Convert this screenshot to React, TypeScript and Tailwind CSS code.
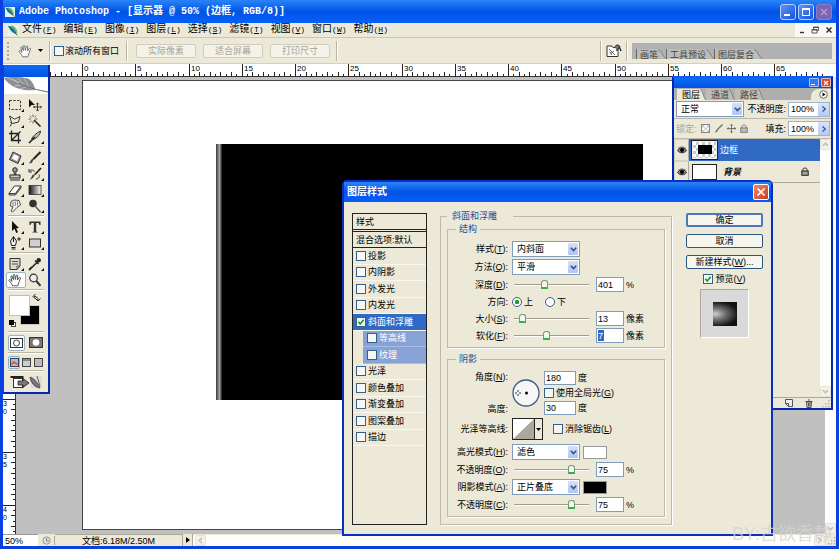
import React, { useState } from 'react';

const SANS = "font-['Liberation_Sans','Noto_Sans_CJK_SC',sans-serif]";
const MONO = "font-['Liberation_Mono','Noto_Sans_CJK_SC',monospace]";

const MENUS = [
  ['文件', 'F'],
  ['编辑', 'E'],
  ['图像', 'I'],
  ['图层', 'L'],
  ['选择', 'S'],
  ['滤镜', 'T'],
  ['视图', 'V'],
  ['窗口', 'W'],
  ['帮助', 'H'],
];

const Feather = ({ className = '' }: { className?: string }) => (
  <svg viewBox="0 0 12 12" className={className} aria-hidden="true">
    <rect width="12" height="12" fill="#e8f4f4" />
    <path d="M1 1 C5 1 9 3 10 10 C6 9 2 6 1 1Z" fill="#2b8f9c" />
    <path d="M4 1 C8 2 10 5 10 9" stroke="#6cc04a" strokeWidth="1.4" fill="none" />
    <path d="M1 1 L11 11.5" stroke="#134" strokeWidth="0.8" />
  </svg>
);

// ---------- title bar / menu bar ----------

const TitleBar = () => (
  <header className="flex h-[23px] shrink-0 items-center bg-linear-to-b from-[#2a84f8] via-[#0353e6] to-[#0560f8] pt-px pr-1 pl-[2px]">
    <Feather className="h-[10px] w-[10px]" />
    <h1 className={`ml-1 flex-1 text-[10px] leading-3 font-bold whitespace-pre text-white ${MONO}`}>
      Adobe Photoshop - [显示器 @ 50% (边框, RGB/8)]
    </h1>
    <div className="flex gap-[2px]">
      <button type="button" aria-label="最小化" className="flex h-4 w-4 items-end rounded-[3px] border border-[#b8d0fa] bg-linear-to-br from-[#5f92f8] to-[#1a50d8] p-[3px]">
        <span className="h-[2px] w-[6px] bg-white" />
      </button>
      <button type="button" aria-label="还原" className="h-4 w-4 rounded-[3px] border border-[#b8d0fa] bg-linear-to-br from-[#5f92f8] to-[#1a50d8] p-[3px]">
        <span className="block h-2 w-2 border border-t-2 border-white" />
      </button>
      <button type="button" aria-label="关闭" className="h-4 w-4 rounded-[3px] border border-[#8b7fc0] bg-[#7a64b4] p-[3px]">
        <svg viewBox="0 0 8 8" className="h-2 w-2"><path d="M1 1L7 7M7 1L1 7" stroke="#a79bd2" strokeWidth="1.5" /></svg>
      </button>
    </div>
  </header>
);

const MenuBar = () => (
  <nav className="flex h-[15px] shrink-0 items-center border-b border-[#c9c6b6] bg-[#ece9d8] pl-1">
    <Feather className="h-[11px] w-[12px]" />
    <ul className={`ml-[3px] flex gap-[7px] text-[10px] leading-3 text-black ${MONO}`}>
      {MENUS.map(([name, key]) => (
        <li key={name}>
          <a href="#" className="block whitespace-nowrap">
            {name}<span className="text-[8px]">(<u>{key}</u>)</span>
          </a>
        </li>
      ))}
    </ul>
    <div className="ml-auto flex h-full w-[41px] items-center justify-around bg-[#f8f8f4] text-[#333]">
      <svg viewBox="0 0 8 8" className="h-2 w-2"><path d="M2 6.5H6" stroke="currentColor" strokeWidth="1.4" /></svg>
      <svg viewBox="0 0 8 8" className="h-2 w-2"><path d="M2.5 3V1H7.5V4.5H6M1 3.5H6V7H1Z M2.5 1.5H7.5 M1 4H6" stroke="currentColor" fill="none" strokeWidth="0.8" /></svg>
      <svg viewBox="0 0 8 8" className="h-2 w-2"><path d="M1.5 1.5L6.5 6.5M6.5 1.5L1.5 6.5" stroke="currentColor" strokeWidth="1.5" /></svg>
    </div>
  </nav>
);

const Hand = ({ className = '' }: { className?: string }) => (
  <svg viewBox="0 0 14 14" className={className} aria-hidden="true">
    <path
      d="M4.5 12.8 L3.6 10.6 L1 7.6 C0.6 6.7 1.8 6.3 2.5 7 L4 8.4 L2.8 3.8 C2.7 2.8 3.9 2.6 4.2 3.5 L5.4 6.6 L5.2 2.2 C5.3 1.2 6.6 1.2 6.8 2.2 L7.3 6.4 L8.3 2.5 C8.6 1.6 9.8 1.9 9.7 2.8 L9.4 7 L11.2 4.6 C11.8 3.9 12.8 4.5 12.5 5.3 L10.8 9.6 L9.8 12.8 Z"
      fill="#fff"
      stroke="#666"
      strokeWidth="0.9"
      strokeLinejoin="round"
    />
  </svg>
);

const Divider = () => <span className="h-5 w-[2px] border-l border-[#b5b2a2] bg-white" />;

const OptionsBar = () => (
  <section className={`flex h-[26px] shrink-0 items-center border-b border-[#d3d0c0] bg-[#ece9d8] pl-1 text-[9px] leading-3 ${SANS}`}>
    <span className="h-[18px] border-l-2 border-dotted border-[#aca899]" />
    <Hand className="ml-[9px] h-[14px] w-[14px]" />
    <svg viewBox="0 0 5 3" className="ml-[6px] h-[3px] w-[5px]"><path d="M0 0H5L2.5 3Z" /></svg>
    <span className="ml-[6px] flex items-center"><Divider /></span>
    <label className="ml-[3px] flex items-center gap-px">
      <Check /> 滚动所有窗口
    </label>
    <span className="mr-2 ml-[7px] flex items-center"><Divider /></span>
    <div className="flex gap-[7px]">
      {['实际像素', '适合屏幕', '打印尺寸'].map((t) => (
        <button key={t} type="button" disabled className="h-[14px] w-[60px] rounded-[2px] border border-[#d0cdbf] bg-[#f4f3ea] leading-3 text-[#a7a594]">
          {t}
        </button>
      ))}
    </div>
    <span className="ml-[6px] flex items-center"><Divider /></span>
    <div className="ml-auto flex items-center gap-1 pr-1">
      <Divider />
      <svg viewBox="0 0 16 14" className="h-[14px] w-4" aria-hidden="true">
        <path d="M1 2H6L7 3.5H12V12.5H1Z" fill="#fff" stroke="#333" />
        <path d="M3 5L9 11M4 10L8 7M3.500 7.500L6 11" stroke="#666" />
        <path d="M9 2.500C10 0.500 13.500 0.500 14 3L12 4.500L10.500 7" fill="#777" stroke="#222" />
        <path d="M13.500 3.500L15 7" stroke="#222" strokeWidth="1.4" />
      </svg>
      <Divider />
      <div className="flex h-4 w-[200px] items-end bg-[#b1b1b1] pl-1 text-[#444]">
        {['画笔', '工具预设', '图层复合'].map((t) => (
          <span key={t} className="flex h-[10px] items-center">
            <span className="h-[10px] border-l border-[#666] bg-[#bdbdb8] pl-[3px] leading-3">{t}</span>
            <svg viewBox="0 0 9 10" className="h-[10px] w-[8px]"><path d="M0 0C4 1 5 8 9 10H0Z" fill="#bdbdb8" /><path d="M0 0C4 1 5 8 9 10" fill="none" stroke="#777" /></svg>
          </span>
        ))}
      </div>
    </div>
  </section>
);

// ---------- shared controls ----------

const Check = ({ on = false }: { on?: boolean }) => {
  const [checked, setChecked] = useState(on);
  return (
    <span className="relative flex h-[10px] w-[10px] shrink-0">
      <input
        type="checkbox"
        checked={checked}
        onChange={(e) => setChecked(e.target.checked)}
        className="h-[10px] w-[10px] appearance-none border border-[#33608c] bg-[#f6f6f2]"
      />
      {checked && (
        <svg viewBox="0 0 10 10" className="pointer-events-none absolute inset-0 h-[10px] w-[10px]">
          <path d="M2.3 4.8L4.2 7L7.7 2.8" stroke="#1e9a1e" strokeWidth="1.7" fill="none" />
        </svg>
      )}
    </span>
  );
};

interface DropProps {
  id: string;
  options: string[];
}

const Drop = ({ id, options }: DropProps) => (
  <span className="relative flex h-4 w-[68px] shrink-0">
    <select id={id} className="h-4 w-full appearance-none border border-[#7f9db9] bg-white pl-1 leading-3 text-black">
      {options.map((o) => (
        <option key={o}>{o}</option>
      ))}
    </select>
    <span className="pointer-events-none absolute top-[2px] right-[2px] flex h-3 w-[10px] items-center justify-center rounded-[1px] bg-linear-to-b from-[#d5e1fc] to-[#aec5f5]">
      <svg viewBox="0 0 7 5" className="h-[5px] w-[7px]"><path d="M0.8 0.8L3.5 3.5L6.2 0.8" stroke="#36507a" strokeWidth="1.6" fill="none" /></svg>
    </span>
  </span>
);

const Slide = ({ id, value }: { id: string; value: number }) => (
  <input
    id={id}
    type="range"
    min={0}
    max={100}
    defaultValue={value}
    className="mr-[7px] ml-[2px] h-3 w-[75px] appearance-none bg-transparent [&::-webkit-slider-runnable-track]:h-[2px] [&::-webkit-slider-runnable-track]:border-t [&::-webkit-slider-runnable-track]:border-[#a09d8e] [&::-webkit-slider-runnable-track]:bg-white [&::-webkit-slider-thumb]:-mt-[5px] [&::-webkit-slider-thumb]:h-[9px] [&::-webkit-slider-thumb]:w-[7px] [&::-webkit-slider-thumb]:appearance-none [&::-webkit-slider-thumb]:rounded-t-[3px] [&::-webkit-slider-thumb]:border [&::-webkit-slider-thumb]:border-b-2 [&::-webkit-slider-thumb]:border-[#6f9c78] [&::-webkit-slider-thumb]:border-b-[#2fb44a] [&::-webkit-slider-thumb]:bg-[#f4f6f0]"
  />
);

const Num = ({ id, value, label }: { id?: string; value: string; label?: string }) => (
  <input id={id} aria-label={label} defaultValue={value} className="h-[15px] w-7 border border-[#7f9db9] bg-white pl-px text-black" />
);

interface FieldProps {
  label: string;
  hotkey?: string;
  htmlFor?: string;
  tall?: boolean;
  children: React.ReactNode;
}

const Field = ({ label, hotkey, htmlFor, tall, children }: FieldProps) => (
  <div className={`flex items-center ${tall ? 'h-[18px]' : 'h-[17px]'}`}>
    <label htmlFor={htmlFor} className="mr-1 w-[60px] shrink-0 text-right whitespace-nowrap">
      {label}
      {hotkey && <>(<u>{hotkey}</u>)</>}:
    </label>
    {children}
  </div>
);

// ---------- rulers and canvas ----------

const TopRuler = () => {
  const ticks = Array.from({ length: 400 }, (_, i) => i - 6);
  return (
    <svg className="ml-[47px] block h-[13px] w-[calc(100%-58px)]" aria-hidden="true">
      <rect width="100%" height="13" fill="#fff" />
      {ticks.map((i) => {
        const x = Math.round(32 + i * 5.325) + 0.5;
        const top = i % 10 === 0 ? 0 : i % 2 === 0 ? 8 : 10;
        return <path key={i} d={`M${x} ${top}V13`} stroke="#222" />;
      })}
      {[0, 5, 10, 15, 20, 25, 30, 35, 40, 45, 50, 55, 60, 65].map((n) => (
        <text key={n} x={Math.round(34 + n * 10.65)} y="7" fontSize="8" fontFamily="Liberation Sans, sans-serif">{n}</text>
      ))}
      <path d="M0 12.5H2000" stroke="#333" />
    </svg>
  );
};

const SideRuler = () => {
  const ticks = Array.from({ length: 250 }, (_, i) => i);
  return (
    <svg className="h-full w-[13px] shrink-0 bg-white" aria-hidden="true">
      {ticks.map((i) => {
        const y = Math.round(3 + i * 5.31) + 0.5;
        const left = i % 10 === 0 ? 0 : i % 2 === 0 ? 8 : 10;
        return <path key={i} d={`M${left} ${y}H13`} stroke="#222" />;
      })}
      {[30, 35, 40].map((n) =>
        String(n).split('').map((c, k) => (
          <text key={`${n}-${k}`} x="0" y={Math.round(10 + n * 10.62) + k * 8} fontSize="7" fontFamily="Liberation Sans, sans-serif">{c}</text>
        ))
      )}
      <path d="M12.5 0V2000" stroke="#333" />
    </svg>
  );
};

const Arrow = ({ d }: { d: string }) => (
  <svg viewBox="0 0 11 11" className="h-[11px] w-[11px] shrink-0" aria-hidden="true">
    <rect x="0.5" y="0.5" width="10" height="10" rx="1" fill="#f2f1ea" stroke="#e2e1d6" />
    <path d={d} stroke="#bdbbab" strokeWidth="1.4" fill="none" />
  </svg>
);

const UP = 'M3 6.8L5.5 4.2L8 6.8';
const DOWN = 'M3 4.2L5.5 6.8L8 4.2';

const Workspace = () => (
  <main className="flex min-h-0 flex-1 flex-col">
    <div className="shrink-0 bg-[#fdfdfa]"><TopRuler /></div>
    <div className="flex min-h-0 flex-1">
      <SideRuler />
      <div className="min-w-0 flex-1 bg-[#c0c0c0] pt-[3px] pr-[90px] pb-1 pl-[66px]">
        <div className="h-full overflow-hidden border border-[#444] bg-white pt-[63px] pl-[133px]">
          <div className="h-64 w-[427px] bg-black">
            <div className="h-full w-[7px] bg-linear-to-r from-[#3a3a3a] via-[#a8a8a8] to-black" />
          </div>
        </div>
      </div>
      <div className="flex w-[11px] flex-col justify-between bg-[#fdfdfa]">
        <Arrow d={UP} />
        <Arrow d={DOWN} />
      </div>
    </div>
  </main>
);

const Grip = () => (
  <svg viewBox="0 0 9 9" className="h-[9px] w-[9px]" fill="#b5b2a2" aria-hidden="true">
    <path d="M7 1H8.500V2.500H7ZM7 4H8.500V5.500H7ZM7 7H8.500V8.500H7ZM4 4H5.500V5.500H4ZM4 7H5.500V8.500H4ZM1 7H2.500V8.500H1Z" />
  </svg>
);

const StatusBar = () => (
  <footer className={`flex h-3 shrink-0 items-center bg-[#ece9d8] text-[9px] leading-3 ${SANS}`}>
    <input aria-label="缩放" defaultValue="50%" className="h-3 w-[35px] border-t border-[#999] bg-white pl-[2px]" />
    <span className="flex w-[17px] justify-center border-r border-[#aca899]">
      <svg viewBox="0 0 9 9" className="h-[9px] w-[9px]"><circle cx="4.5" cy="4.5" r="3.7" fill="#ddd" stroke="#999" /><path d="M4.5 2V5H7" stroke="#888" fill="none" /></svg>
    </span>
    <span className="h-3 w-[128px] border-t border-r border-[#aca899] text-center">文档:6.18M/2.50M</span>
    <span className="flex h-3 w-[10px] items-center justify-center border-r border-[#aca899]">
      <svg viewBox="0 0 4 6" className="h-[6px] w-1"><path d="M0 0L4 3L0 6Z" /></svg>
    </span>
    <div className="flex flex-1 justify-between bg-[#fdfdfa] pl-[2px]">
      <Arrow d="M6.8 3L4.2 5.5L6.8 8" />
      <Arrow d="M4.2 3L6.8 5.5L4.2 8" />
    </div>
    <span className="flex w-[11px] justify-end"><Grip /></span>
  </footer>
);

// ---------- toolbox ----------

const TOOLS: { name: string; more?: boolean; art: React.ReactNode }[][] = [
  [
    { name: '矩形选框', more: true, art: <rect x="1.5" y="2.5" width="11" height="9" fill="none" stroke="#333" strokeDasharray="2.4 1.4" /> },
    { name: '移动', art: <><path d="M1 1L7 7H3.6L1 9.5Z" fill="#111" /><path d="M9.5 5V13M5.5 9H13.5M8.2 6.3L9.5 5L10.8 6.3M8.2 11.7L9.5 13L10.8 11.7M12.3 7.8L13.5 9L12.3 10.2M6.7 7.8L5.5 9L6.7 10.2" stroke="#222" fill="none" strokeWidth="0.9" /></> },
    { name: '套索', more: true, art: <path d="M2 12.5L3.8 9.2L1.5 2L6.5 5.2L12 2.5L10.5 8L4.5 9.5L2.500 8.500" fill="none" stroke="#333" /> },
    { name: '魔棒', art: <><path d="M6 6L12.5 12.5" stroke="#222" strokeWidth="1.6" /><path d="M5 0.5V3M5 7V9.5M0.5 5H3M7 5H9.5M1.8 1.8L3.5 3.5M8.2 1.8L6.6 3.4M1.8 8.2L3.4 6.6" stroke="#555" strokeWidth="0.9" /></> },
    { name: '裁剪', art: <path d="M3.5 0.5V10.5H13M1 3.5H10.5V13.5M3.5 10.5L12.5 1.5" fill="none" stroke="#222" strokeWidth="1.3" /> },
    { name: '切片', more: true, art: <><path d="M3.500 9C5 6 8.500 3 12.5 1C12.5 4 9 8 7 8.5L5.5 9.5Z" fill="#bbb" stroke="#222" strokeWidth="0.9" /><path d="M7 7L1 13" stroke="#222" strokeWidth="1.6" /></> },
  ],
  [
    { name: '修补', more: true, art: <><path d="M5 1L13 5L10 12.500L1.500 8.500Z" fill="#999" stroke="#333" /><path d="M6 3L11 5.500L9 10L4 7.500Z" fill="#fff" /></> },
    { name: '画笔', more: true, art: <><path d="M12.5 1L5.5 8" stroke="#222" strokeWidth="2" /><path d="M6.3 7.5L5 9.5C4.5 12 3 12.5 0.8 12.3C2.5 11 2.5 9 4.5 7.5Z" fill="#444" /></> },
    { name: '图章', more: true, art: <><circle cx="7" cy="3" r="2.3" fill="#999" stroke="#222" /><path d="M6 5L5.3 8H8.7L8 5Z" fill="#555" /><rect x="2" y="8" width="10" height="3" fill="#ccc" stroke="#222" /><path d="M2 13H12" stroke="#222" /></> },
    { name: '历史画笔', more: true, art: <><path d="M13 1L7 7.5" stroke="#222" strokeWidth="1.8" /><path d="M7.5 7L5 11L2 12.8L4.5 8Z" fill="#444" /><path d="M1 4.5C3 2 6 3 6.5 5M1 2V5H4M8 12C11 12 12 9 11 7.5" fill="none" stroke="#333" /></> },
    { name: '橡皮擦', more: true, art: <><path d="M6.5 3H13L7.5 10.5H1Z" fill="#fff" stroke="#333" /><path d="M1 10.5V12H7.5L13 5V3L7.5 10.5Z" fill="#aaa" stroke="#333" strokeWidth="0.8" /></> },
    { name: '渐变', more: true, art: <><defs><linearGradient id="tg"><stop offset="0" stopColor="#111" /><stop offset="1" stopColor="#fff" /></linearGradient></defs><rect x="1" y="2.5" width="12" height="9" fill="url(#tg)" stroke="#333" strokeWidth="0.8" /></> },
    { name: '涂抹', more: true, art: <><path d="M3 2.500L6 1L11 1.500L12.500 6L9 8.500L4.500 13L3 12L5 8L2.500 7Z" fill="#eee" stroke="#444" strokeWidth="0.9" /><path d="M5 3V7.500M7.300 2.500V7M9.500 2.500V6.500" stroke="#666" strokeWidth="0.8" /></> },
    { name: '加深', more: true, art: <><circle cx="5" cy="4.5" r="3.8" fill="#333" /><path d="M7.5 7.5L12.5 13" stroke="#555" strokeWidth="1.4" /></> },
  ],
  [
    { name: '路径选择', more: true, art: <path d="M4 1V11L6.4 8.8L8.3 13L10 12.2L8.2 8.3L11 8Z" fill="#111" /> },
    { name: '文字', more: true, art: <path d="M1.5 1.5H12.5V5H11.5L10.5 3H8.2V11.6L10 12.5H4L5.8 11.6V3H3.5L2.5 5H1.5Z" fill="#333" /> },
    { name: '钢笔', more: true, art: <><path d="M5.5 0.5L8.5 5L7.5 9.5H3.5L2.5 5Z" fill="#eee" stroke="#222" /><path d="M5.5 1V6M3.500 11.500H7.500M3.500 13H7.500" stroke="#222" strokeWidth="1.1" /><path d="M9 3H13M11 1V5" stroke="#222" /></> },
    { name: '矩形', more: true, art: <rect x="1.5" y="3" width="11" height="8" fill="#cfcfcf" stroke="#333" /> },
  ],
  [
    { name: '注释', more: true, art: <><path d="M2 1.5H12V9L9 12.5H2Z" fill="#d9d9d2" stroke="#333" /><path d="M4 4.5H10M4 7H10M9 12.5V9H12" stroke="#555" fill="none" /></> },
    { name: '吸管', more: true, art: <><path d="M8.5 5.5L3 11L1 13" stroke="#222" strokeWidth="1.8" /><path d="M8 5L3.5 9.5" stroke="#ddd" strokeWidth="0.8" /><path d="M7 3.5L10.5 7" stroke="#222" strokeWidth="1.6" /><circle cx="10.7" cy="3.3" r="2.2" fill="#222" /></> },
    { name: '抓手', art: <path d="M4.5 12.8L3.6 10.6L1 7.6C.6 6.7 1.8 6.3 2.5 7L4 8.4L2.8 3.8C2.7 2.8 3.9 2.6 4.2 3.5L5.4 6.6L5.2 2.2C5.3 1.2 6.6 1.2 6.8 2.2L7.3 6.4L8.3 2.5C8.6 1.6 9.8 1.9 9.7 2.8L9.4 7L11.2 4.6C11.8 3.9 12.8 4.5 12.5 5.3L10.8 9.6L9.8 12.8Z" fill="#fff" stroke="#444" strokeWidth="0.9" /> },
    { name: '缩放', art: <><circle cx="5.5" cy="5" r="3.8" fill="#eee" stroke="#333" strokeWidth="1.2" /><path d="M8.3 8L12.5 12.8" stroke="#333" strokeWidth="2" /></> },
  ],
];

const Rule = () => <hr className="mx-1 h-[2px] border-0 border-t border-[#b9b6a6] bg-white" />;

const Toolbox = () => {
  const [tool, setTool] = useState('抓手');
  return (
    <aside className="absolute top-[65px] left-0 w-[50px] border-r-2 border-b-2 border-l-4 border-[#0627b0] border-l-[#0a3fe0] bg-[#ece9d8]">
      <div className="h-3 bg-linear-to-b from-[#0c6bf8] to-[#0453e0]" />
      <svg viewBox="0 0 44 17" className="block h-[17px] w-full bg-white" preserveAspectRatio="none" aria-hidden="true">
        <path d="M0 1C8 -1 20 0 25 2C29 5 31 10 31 13C22 14 12 12 7 8C4 6 1 3 0 1Z" fill="#8d9094" />
        <path d="M3 1C12 3 20 8 30 13M8 2L14 6M14 1L20 8M20 1L25 10M10 9L17 8M16 12L22 10" stroke="#c4c7ca" fill="none" strokeWidth="0.8" />
        <path d="M15 6C24 11 34 13 44 15" stroke="#666" fill="none" />
      </svg>
      <div className="pt-px">
        {TOOLS.map((group, g) => (
          <div key={g}>
            {g > 0 && <Rule />}
            <div className="grid grid-cols-2 gap-x-px px-[2px] pt-[2px] pb-px">
              {group.map((t) => (
                <button
                  key={t.name}
                  type="button"
                  aria-label={t.name}
                  onClick={() => setTool(t.name)}
                  className={`flex h-4 items-center justify-center rounded-[2px] ${tool === t.name ? 'border border-[#9bb4c4] bg-white' : ''}`}
                >
                  <svg viewBox="0 0 16 14" className="h-[14px] w-4">
                    {t.art}
                    {t.more && <path d="M16 11V14H13Z" fill="#111" />}
                  </svg>
                </button>
              ))}
            </div>
          </div>
        ))}
      </div>
      <Rule />
      <svg viewBox="0 0 44 40" className="block h-10 w-full" aria-hidden="true">
        <rect x="16.500" y="14.500" width="19" height="19" fill="#000" stroke="#ccc" />
        <rect x="5.500" y="4.500" width="20" height="20" fill="#fff" stroke="#b8c0c4" />
        <path d="M30 5.500C33 5.500 34 7 34 9M31.500 3L29 5.500L31.500 8M31.500 7.500L34 10L36.500 7.500" stroke="#222" fill="none" />
        <rect x="7.500" y="31.500" width="4" height="4" fill="#fff" stroke="#444" />
        <rect x="5" y="29" width="5" height="5" fill="#000" />
      </svg>
      <Rule />
      <div className="flex h-[19px] items-center justify-center gap-[2px]">
        <button type="button" aria-label="标准模式" className="flex h-4 w-[17px] items-center justify-center rounded-[2px] border border-[#9bb4c4] bg-white">
          <svg viewBox="0 0 13 10" className="h-[10px] w-[13px]"><rect x="0.5" y="0.5" width="12" height="9" fill="#fff" stroke="#333" /><circle cx="6.5" cy="5" r="3" fill="#fff" stroke="#444" /></svg>
        </button>
        <button type="button" aria-label="快速蒙版" className="flex h-4 w-[17px] items-center justify-center">
          <svg viewBox="0 0 14 11" className="h-[11px] w-[14px]"><rect x="0.5" y="0.5" width="13" height="10" fill="#777" stroke="#333" /><circle cx="7" cy="5.500" r="3.300" fill="#fff" /></svg>
        </button>
      </div>
      <Rule />
      <div className="flex h-4 items-center justify-center gap-px">
        <button type="button" aria-label="标准屏幕" className="flex h-[13px] w-[12px] items-center justify-center rounded-[2px] border border-[#8fb2cc] bg-[#dbe9f2]">
          <svg viewBox="0 0 9 9" className="h-[9px] w-[9px]"><rect x="0.5" y="0.5" width="8" height="8" fill="#a9c3dd" stroke="#345" /><path d="M1.500 6.500L4 4L7.500 6.500" stroke="#e05c3c" strokeWidth="2" fill="none" /></svg>
        </button>
        <button type="button" aria-label="带菜单全屏" className="flex w-[11px] justify-center">
          <svg viewBox="0 0 9 9" className="h-[9px] w-[9px]"><rect x="0.5" y="0.5" width="8" height="8" fill="#ccc" stroke="#444" /><path d="M1 2H8" stroke="#444" /></svg>
        </button>
        <button type="button" aria-label="全屏" className="flex w-[11px] justify-center">
          <svg viewBox="0 0 9 9" className="h-[9px] w-[9px]"><rect x="0.5" y="0.5" width="8" height="8" fill="#bbb" stroke="#444" /></svg>
        </button>
      </div>
      <Rule />
      <button type="button" aria-label="在 ImageReady 中编辑" className="flex h-[20px] w-full items-center justify-center">
        <svg viewBox="0 0 32 14" className="h-[14px] w-8">
          <rect x="3.500" y="3.500" width="9" height="9" fill="#fff" stroke="#333" />
          <path d="M0.500 2H12.500V4" stroke="#222" strokeWidth="2" fill="none" />
          <path d="M8 6H13V3.500L19 8L13 12.500V10H8Z" fill="#777" stroke="#222" strokeWidth="0.800" />
          <rect x="21" y="1" width="11" height="12" fill="#ddd" />
          <path d="M20 2C25 4 28 8 30 13C24 12 21 8 20 2ZM27 1L30 11" fill="#777" stroke="#444" strokeWidth="0.800" />
        </svg>
      </button>
    </aside>
  );
};

// ---------- layers palette ----------

const Percent = ({ id }: { id: string }) => (
  <span className="flex h-[15px] w-[42px] shrink-0 border border-[#9fb4cc] bg-white">
    <input id={id} defaultValue="100%" className="w-full min-w-0 pl-[2px]" />
    <span className="flex w-[11px] shrink-0 items-center justify-center bg-linear-to-b from-[#d8e4fd] to-[#b5caf7]">
      <svg viewBox="0 0 4 6" className="h-[6px] w-1"><path d="M0.500 0.500L3.500 3L0.500 5.500" stroke="#2c4a86" fill="none" strokeWidth="1.200" /></svg>
    </span>
  </span>
);

const Eye = () => (
  <span className="flex w-[15px] shrink-0 items-center justify-center border border-[#d6d3c3] border-r-[#aaa]">
    <svg viewBox="0 0 10 8" className="h-2 w-[10px]">
      <path d="M0.500 4.500C2.500 1 7.500 1 9.500 4.500C7.500 7.500 2.500 7.500 0.500 4.500Z" fill="#888" stroke="#222" />
      <path d="M1 2.500C3 0.500 7 0.500 9 2.500" fill="none" stroke="#555" strokeWidth="0.800" />
      <circle cx="5" cy="4" r="2" fill="#000" />
    </svg>
  </span>
);

const Lock = ({ color }: { color: string }) => (
  <svg viewBox="0 0 8 9" className="h-[9px] w-2" stroke={color} fill="none"><path d="M2 4V2.500C2 0.500 6 0.500 6 2.500V4" /><rect x="0.800" y="4" width="6.400" height="4.300" fill={color} fillOpacity="0.35" /></svg>
);

const LayersPalette = () => (
  <aside className={`absolute top-[76px] right-[6px] flex h-[334px] w-[161px] flex-col border-2 border-[#0627b0] border-t-[#0c5ff0] bg-[#ece9d8] text-[9px] leading-3 ${SANS}`}>
    <div className="flex h-[10px] shrink-0 items-start justify-end gap-[2px] bg-linear-to-b from-[#0c6bf8] to-[#0453e0]">
      <button type="button" aria-label="最小化" className="flex h-[9px] w-[10px] items-end rounded-[1px] border border-[#a8c4fa] bg-[#3c76ee] p-px"><span className="h-px w-1 bg-white" /></button>
      <button type="button" aria-label="关闭" className="flex h-[9px] w-[10px] items-center justify-center rounded-[1px] border border-[#f0b8a8] bg-[#d8482c]">
        <svg viewBox="0 0 6 6" className="h-[6px] w-[6px]"><path d="M1 1L5 5M5 1L1 5" stroke="#fff" strokeWidth="1.200" /></svg>
      </button>
    </div>
    <div className="flex h-3 shrink-0 items-end bg-[#aeaeae] pl-[3px] text-[#444]">
      {['图层', '通道', '路径'].map((t, i) => (
        <span key={t} className="flex h-[11px]">
          <span className={`pl-[5px] leading-3 ${i === 0 ? 'bg-[#ece9d8] text-black' : 'bg-[#bdbdb8]'}`}>{t}</span>
          <svg viewBox="0 0 9 11" className="h-[11px] w-[6px]" preserveAspectRatio="none"><path d="M0 0C4 1 5 9 9 11H0Z" fill={i === 0 ? '#ece9d8' : '#bdbdb8'} /><path d="M0 0C4 1 5 9 9 11" fill="none" stroke="#777" /></svg>
        </span>
      ))}
      <span className="ml-auto flex h-[11px] items-center rounded-tl-[8px] bg-[#ece9d8] pr-[3px] pl-2">
        <svg viewBox="0 0 9 9" className="h-[9px] w-[9px]"><circle cx="4.500" cy="4.500" r="3.800" fill="#fff" stroke="#444" strokeWidth="0.800" /><path d="M3.500 2.500L6.500 4.500L3.500 6.500Z" /></svg>
      </span>
    </div>
    <div className="flex h-[19px] shrink-0 items-center border-b border-[#bbb8a8] pr-px pl-[2px]">
      <Drop id="blend" options={['正常']} />
      <label htmlFor="opacity" className="ml-auto pr-[2px]">不透明度:</label>
      <Percent id="opacity" />
    </div>
    <div className="flex h-[20px] shrink-0 items-center border-b border-[#bbb8a8] pr-px pl-[2px]">
      <span className="text-[#a7a594]">锁定:</span>
      <span className="ml-1 flex items-center gap-1">
        <svg viewBox="0 0 9 9" className="h-[9px] w-[9px]"><rect x="0.500" y="0.500" width="8" height="8" fill="#fff" stroke="#888" /><path d="M1 1H3.500V3.500H6V1H8V3.500H6V6H8V8H6V6H3.500V8H1V6H3.500V3.500H1Z" fill="#ccc" /></svg>
        <svg viewBox="0 0 9 9" className="h-[9px] w-[9px]"><path d="M8.500 0.500L4 5" stroke="#777" strokeWidth="1.500" /><path d="M4.500 4.500C4 7.500 3 8.500 0.500 8.500C2 7 2 6 3.500 4.500Z" fill="#777" /></svg>
        <svg viewBox="0 0 9 9" className="h-[9px] w-[9px]"><path d="M4.500 0V9M0 4.500H9M3.200 1.500L4.500 0.200L5.800 1.500M3.200 7.500L4.500 8.800L5.800 7.500M1.500 3.200L0.200 4.500L1.500 5.800M7.500 3.200L8.800 4.500L7.500 5.800" stroke="#666" fill="none" strokeWidth="0.900" /></svg>
        <Lock color="#777" />
      </span>
      <label htmlFor="fill" className="ml-auto pr-[2px]">填充:</label>
      <Percent id="fill" />
    </div>
    <div className="flex min-h-0 flex-1">
      <ul className="flex-1">
        <li className="flex h-[22px]">
          <Eye />
          <div className="flex flex-1 items-center gap-[3px] bg-[#316ac5] pl-[3px] text-white">
            <span className="flex h-[18px] w-[25px] items-start justify-center border border-[#eee] bg-white bg-[repeating-conic-gradient(#ccc_0_25%,#fff_0_50%)] bg-[length:6px_6px] pt-[3px] outline outline-[#222]">
              <span className="h-[9px] w-[14px] bg-black" />
            </span>
            边框
          </div>
        </li>
        <li className="flex h-[22px] border-b border-[#aca899]">
          <Eye />
          <div className="flex flex-1 items-center gap-[6px] pr-[11px] pl-[3px]">
            <span className="h-4 w-[25px] border border-[#222] bg-white" />
            <i className="flex-1 font-bold">背景</i>
            <Lock color="#222" />
          </div>
        </li>
      </ul>
      <div className="flex w-[11px] flex-col justify-between bg-[#fdfdfa]">
        <Arrow d={UP} />
        <Arrow d={DOWN} />
      </div>
    </div>
    <div className="flex h-[11px] shrink-0 items-center justify-end border-t border-[#aca899] pr-px">
      <svg viewBox="0 0 8 8" className="mr-3 h-2 w-2"><path d="M0.500 0.500H7.500V7.500H3.500L0.500 4.500Z M0.500 4.500H3.500V7.500" fill="#eee" stroke="#555" /></svg>
      <svg viewBox="0 0 8 9" className="mr-2 h-[9px] w-2"><path d="M1.500 3H6.500L6 8.500H2ZM0.500 2.500H7.500M3 1H5M3.500 4V7.500M5 4V7.500" fill="#ccc" stroke="#444" strokeWidth="0.900" /></svg>
      <Grip />
    </div>
  </aside>
);

// ---------- layer style dialog ----------

const STYLES = ['投影', '内阴影', '外发光', '内发光', '斜面和浮雕', '等高线', '纹理', '光泽', '颜色叠加', '渐变叠加', '图案叠加', '描边'];

const StyleList = () => (
  <div className="flex w-[75px] shrink-0 flex-col border border-[#222]">
    <div className="flex h-[18px] shrink-0 items-center border-b-[3px] border-double border-[#222] pl-[3px]">样式</div>
    <div className="flex h-4 shrink-0 items-center border-b border-[#222] pl-[3px]">混合选项:默认</div>
    <ul className="grid h-[198px] grid-rows-12">
      {STYLES.map((s) => {
        const sub = s === '等高线' || s === '纹理';
        const active = s === '斜面和浮雕';
        return (
          <li
            key={s}
            className={`flex items-center border-b ${sub ? 'ml-[10px] border-[#a9bde0] bg-[#87a3d6] pl-1 text-white' : 'border-[#f8f7f0] pl-[3px]'} ${active ? 'bg-[#316ac5] text-white' : ''}`}
          >
            <label className="flex items-center gap-[2px] whitespace-nowrap">
              <Check on={active} /> {s}
            </label>
          </li>
        );
      })}
    </ul>
  </div>
);

const Legend = ({ children, wide }: { children: React.ReactNode; wide?: boolean }) => (
  <legend className={`h-3 text-[#17509f] ${wide ? 'pr-4 pl-[5px]' : 'ml-2 px-[3px]'}`}>{children}</legend>
);

const LayerStyleDialog = () => (
  <section
    role="dialog"
    aria-label="图层样式"
    className={`absolute top-[180px] left-[342px] w-[431px] rounded-t-[5px] border-2 border-[#0a2fc0] bg-[#ece9d8] text-[9px] leading-3 text-black ${SANS}`}
  >
    <div className="flex h-5 items-center bg-linear-to-b from-[#2a84f8] via-[#0353e6] to-[#0560f8] pr-[2px] pl-[3px]">
      <h2 className="flex-1 text-[10px] font-bold text-white">图层样式</h2>
      <button type="button" aria-label="关闭" className="flex h-4 w-4 items-center justify-center rounded-[2px] border border-white bg-linear-to-br from-[#f08868] to-[#c8381c]">
        <svg viewBox="0 0 10 10" className="h-[10px] w-[10px]"><path d="M1.500 1.500L8.500 8.500M8.500 1.500L1.500 8.500" stroke="#fff" strokeWidth="1.700" /></svg>
      </button>
    </div>
    <div className="flex px-2 pt-2 pb-[9px]">
      <div className="flex pt-[3px]">
        <StyleList />
      </div>
      <fieldset className="ml-[13px] min-w-0 flex-1 border border-[#bdbaaa] px-[6px] pb-[7px] shadow-[1px_1px_0_#fff]">
        <Legend wide>斜面和浮雕</Legend>
        <fieldset className="mt-px border border-[#bdbaaa] pb-[3px] shadow-[1px_1px_0_#fff]">
          <Legend>结构</Legend>
          <div className="pt-[5px]">
            <Field label="样式" hotkey="T" htmlFor="style" tall><Drop id="style" options={['内斜面']} /></Field>
            <Field label="方法" hotkey="Q" htmlFor="tech" tall><Drop id="tech" options={['平滑']} /></Field>
            <Field label="深度" hotkey="D" htmlFor="depth">
              <Slide id="depth" value={40} /><Num label="深度" value="401" /><span className="ml-[2px]">%</span>
            </Field>
            <Field label="方向">
              {['上', '下'].map((d, i) => (
                <label key={d} className="mr-3 flex items-center gap-[2px]">
                  <input type="radio" name="dir" defaultChecked={i === 0} className="h-[10px] w-[10px] appearance-none rounded-full border border-[#33608c] bg-white checked:bg-radial checked:from-[#21a121] checked:from-35% checked:to-white checked:to-45%" />
                  {d}
                </label>
              ))}
            </Field>
            <Field label="大小" hotkey="S" htmlFor="size">
              <Slide id="size" value={7} /><Num label="大小" value="13" /><span className="ml-[2px]">像素</span>
            </Field>
            <Field label="软化" hotkey="F" htmlFor="soften">
              <Slide id="soften" value={43} />
              <span className="flex h-[15px] w-7 items-center border border-[#7f9db9] bg-white pl-px">
                <input aria-label="软化" defaultValue="7" className="h-[11px] w-[6px] bg-[#316ac5] text-white" />
              </span>
              <span className="ml-[2px]">像素</span>
            </Field>
          </div>
        </fieldset>
        <fieldset className="mt-[5px] border border-[#bdbaaa] pb-[3px] shadow-[1px_1px_0_#fff]">
          <Legend>阴影</Legend>
          <div className="flex pt-[6px]">
            <div className="flex w-[60px] flex-col justify-between text-right">
              <label htmlFor="angle">角度(<u>N</u>):</label>
              <label htmlFor="altitude">高度:</label>
            </div>
            <svg viewBox="0 0 28 28" className="mt-2 ml-1 h-7 w-7" aria-hidden="true">
              <circle cx="14" cy="14" r="13" fill="#f6f6f6" stroke="#3f5a86" strokeWidth="1.300" />
              <path d="M3 14H5M7 14H9M6 11V13M6 15V17" stroke="#333" />
              <circle cx="14.500" cy="14" r="1.500" />
            </svg>
            <div className="ml-1 flex flex-col gap-px">
              <span className="flex h-[14px] items-center gap-[2px]">
                <input id="angle" defaultValue="180" className="h-[14px] w-8 border border-[#7f9db9] bg-white pl-px" />度
              </span>
              <label className="flex h-[14px] items-center gap-[2px]"><Check /><span>使用全局光(<u>G</u>)</span></label>
              <span className="flex h-[14px] items-center gap-[2px]">
                <input id="altitude" defaultValue="30" className="h-[14px] w-8 border border-[#7f9db9] bg-white pl-px" />度
              </span>
            </div>
          </div>
          <div className="my-[3px] flex h-[22px] items-center">
            <span className="mr-1 w-[60px] text-right">光泽等高线:</span>
            <button type="button" aria-label="光泽等高线" className="flex h-[22px] w-[31px] border border-[#222] bg-white">
              <svg viewBox="0 0 21 20" className="h-5 w-[21px]"><path d="M0 20L21 0V20Z" fill="#aca899" /></svg>
              <span className="flex h-full flex-1 items-center justify-center border-l border-[#222] bg-[#ece9d8]">
                <svg viewBox="0 0 5 3" className="h-[3px] w-[5px]"><path d="M0 0H5L2.500 3Z" /></svg>
              </span>
            </button>
            <label className="ml-[10px] flex items-center gap-[2px]"><Check /><span>消除锯齿(<u>L</u>)</span></label>
          </div>
          <Field label="高光模式" hotkey="H" htmlFor="hi" tall>
            <Drop id="hi" options={['滤色']} />
            <button type="button" aria-label="高光颜色" className="ml-[3px] h-[13px] w-6 border border-[#999] bg-white" />
          </Field>
          <Field label="不透明度" hotkey="O" htmlFor="hiop">
            <Slide id="hiop" value={79} /><Num label="高光不透明度" value="75" /><span className="ml-[2px]">%</span>
          </Field>
          <Field label="阴影模式" hotkey="A" htmlFor="sh" tall>
            <Drop id="sh" options={['正片叠底']} />
            <button type="button" aria-label="阴影颜色" className="ml-[3px] h-[13px] w-6 border border-[#999] bg-black" />
          </Field>
          <Field label="不透明度" hotkey="C" htmlFor="shop">
            <Slide id="shop" value={79} /><Num label="阴影不透明度" value="75" /><span className="ml-[2px]">%</span>
          </Field>
        </fieldset>
      </fieldset>
      <div className="ml-[14px] flex w-[77px] flex-col items-center gap-1 pt-[3px]">
        <div className="flex w-full flex-col gap-[7px]">
          <button type="button" className="h-[14px] rounded-[2px] border-2 border-[#4a78b8] bg-[#f6f5ee] leading-[10px]">确定</button>
          <button type="button" className="h-[14px] rounded-[2px] border border-[#2c5580] bg-[#f6f5ee] leading-3">取消</button>
          <button type="button" className="h-[14px] rounded-[2px] border border-[#2c5580] bg-[#f6f5ee] leading-3">新建样式(<u>W</u>)...</button>
        </div>
        <label className="flex items-center gap-[2px]"><Check on /><span>预览(<u>V</u>)</span></label>
        <div className="flex h-[49px] w-[49px] items-center justify-center border border-[#aca899] border-r-white border-b-white bg-[#d9d9d9]">
          <div className="h-6 w-6 bg-radial-[at_10%_50%] from-[#d0d0d0] via-[#777] via-30% to-[#111] to-75%" />
        </div>
      </div>
    </div>
  </section>
);

export default function App() {
  return (
    <div className="relative flex h-screen min-h-[540px] w-full flex-col overflow-hidden border-x-[3px] border-b-[3px] border-[#0a3fe0] bg-[#ece9d8]">
      <TitleBar />
      <MenuBar />
      <OptionsBar />
      <Workspace />
      <StatusBar />
      <div className="absolute top-0 -left-[3px] h-0 w-[calc(100%+6px)]">
        <Toolbox />
        <LayersPalette />
        <LayerStyleDialog />
      </div>
      <p className={`pointer-events-none absolute right-1 bottom-[2px] text-[18px] leading-5 whitespace-nowrap text-[#d4d4d4]/80 ${SANS}`}>BY:古欲香静</p>
    </div>
  );
}
